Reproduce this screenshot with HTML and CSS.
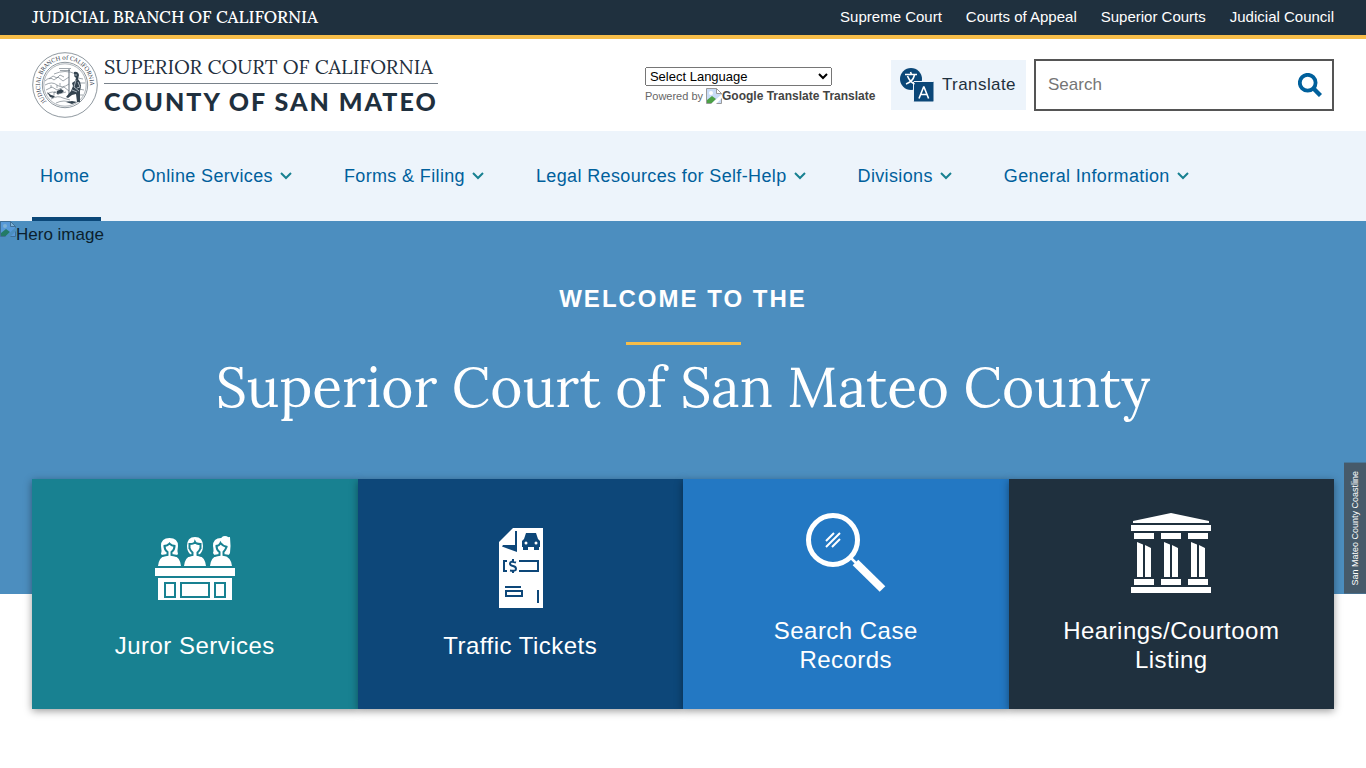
FILE: index.html
```html
<!DOCTYPE html>
<html lang="en">
<head>
<meta charset="utf-8">
<title>Superior Court of San Mateo County</title>
<meta name="viewport" content="width=device-width, initial-scale=1">
<link rel="stylesheet" href="styles.css">
</head>
<body>
<div class="topbar">
  <a class="topbar-brand" href="#">JUDICIAL BRANCH OF CALIFORNIA</a>
  <nav class="topbar-links" aria-label="Judicial branch">
    <a href="#">Supreme Court</a>
    <a href="#">Courts of Appeal</a>
    <a href="#">Superior Courts</a>
    <a href="#">Judicial Council</a>
  </nav>
</div>

<header class="header">
  <a class="logo" href="#">
    <svg class="seal" viewBox="0 0 66 66" aria-hidden="true">
      <defs><path id="ring" d="M14.500 49.500A25 25 0 1 1 51.500 49.500"/></defs>
      <g fill="none" stroke="#5f6b76">
        <circle cx="33" cy="33" r="32.300" stroke-width=".7"/>
        <circle cx="33" cy="33" r="22.700" stroke-width=".7"/>
        <circle cx="33" cy="33" r="21.200" stroke-width=".5"/>
        <g stroke-width=".6">
          <path d="M13 29q5-5 9-1l4-3 5 4 6-4M13 33q7-4 12 0t12-1M14 38l6-3 5 3 7-3 5 4M15 42q6-4 11 0l8-2M19 47q7-4 12-1l7 2M24 51q8-4 16 0M17 27l4-3 4 2 3-3 4 2"/>
          <path d="M27 16.500h12M28 18.500h10M22 22q11-5 22 0M46 26l5 1M48 31h5M47 37l5 1M47 43h4M22 43v-3h4v3M28 34v-3M25 36v-3M19 33v3"/>
          <path d="M37 17v27" stroke-width="1"/>
        </g>
      </g>
      <g fill="#34434f">
        <path d="M42 20q4-1 5 3l-1 4q3 3 3 7l-1 5v11h-3l-1-8-4 1-4 3-2-1 5-6 2-5-1-3 3-2 1-3-2-2z"/>
        <path d="M25 39l4-2 3 2-2 2-5 1zM15 40l4 3 4 1-2 2-3-1zM34 50l6-1 5 1-5 2z"/>
      </g>
      <g stroke="#dce4ea" stroke-width=".7" fill="none"><path d="M44 28l-2 7 5 4M46 30l2 5-3 1M42 23h3M40 38l5 2"/></g>
      <text class="seal-text"><textPath href="#ring">JUDICIAL BRANCH of CALIFORNIA</textPath></text>
    </svg>
    <span class="logo-words">
      <span class="logo-top">SUPERIOR COURT OF CALIFORNIA</span>
      <span class="logo-bottom">COUNTY OF SAN MATEO</span>
    </span>
  </a>

  <div class="tools">
    <div class="gtranslate">
      <select class="language" aria-label="Language Translate Widget"><option>Select Language</option></select>
      <div class="powered">Powered by
        <a href="#"><svg class="broken" viewBox="0 0 16 16" aria-hidden="true"><path d="M.5.500h10l5 5v10H.5z" fill="#c9dcf7" stroke="#9a9a9a"/><path d="M10.500.500v5h5z" fill="#fff" stroke="#9a9a9a"/><circle cx="5" cy="5" r="2" fill="#fff"/><path d="M1 15v-3l5-4 4 3-4 4z" fill="#4ca146"/><path d="M5 16L16 6v4l-6 6z" fill="#fff"/></svg>Google Translate Translate</a>
      </div>
    </div>
    <button class="translate" type="button">
      <svg viewBox="0 0 34 34" aria-hidden="true">
        <circle cx="11" cy="11" r="11" fill="#0b4778"/>
        <path d="M14 13.500h19.500a1 1 0 0 1 .5 1v18.500a1 1 0 0 1-1 1H14.500a1 1 0 0 1-1-1V14z" fill="#0b4778" stroke="#edf4fb" stroke-width="1"/>
        <path d="M5 6.500h12M10.500 4l1 2.500M14.500 7c-1 4-4 7.500-8.500 9M7.500 8c1.500 4 4 6.500 7 8" fill="none" stroke="#fff" stroke-width="1.600"/>
        <path d="M19 30.500l4.800-12 4.800 12M20.500 26.500h6.600" fill="none" stroke="#fff" stroke-width="1.600" stroke-linejoin="bevel"/>
      </svg>
      Translate
    </button>
    <form class="search" role="search">
      <input type="search" placeholder="Search" aria-label="Search">
      <button type="submit" aria-label="Submit search">
        <svg viewBox="0 0 24 24" aria-hidden="true"><circle cx="9.700" cy="9.700" r="7.900" fill="none" stroke="#00609c" stroke-width="3.800"/><path d="M15.500 15.500l7 7" stroke="#00609c" stroke-width="4.400"/></svg>
      </button>
    </form>
  </div>
</header>

<nav class="mainnav" aria-label="Main">
  <a class="active" href="#" aria-current="page">Home</a>
  <a href="#">Online Services<svg viewBox="0 0 12 8" aria-hidden="true"><path d="M1 1l5 5 5-5"/></svg></a>
  <a href="#">Forms &amp; Filing<svg viewBox="0 0 12 8" aria-hidden="true"><path d="M1 1l5 5 5-5"/></svg></a>
  <a href="#">Legal Resources for Self-Help<svg viewBox="0 0 12 8" aria-hidden="true"><path d="M1 1l5 5 5-5"/></svg></a>
  <a href="#">Divisions<svg viewBox="0 0 12 8" aria-hidden="true"><path d="M1 1l5 5 5-5"/></svg></a>
  <a href="#">General Information<svg viewBox="0 0 12 8" aria-hidden="true"><path d="M1 1l5 5 5-5"/></svg></a>
</nav>

<main>
  <section class="hero">
    <div class="hero-image"><svg class="broken" viewBox="0 0 16 16" aria-hidden="true"><path d="M.5.500h10l5 5v10H.5z" fill="#5799d8" stroke="#3f6f96"/><path d="M10.500.500v5h5z" fill="#7db1d6" stroke="#3f6f96"/><circle cx="5" cy="5" r="2" fill="#7db1d6"/><path d="M1 15v-3l5-4 4 3-4 4z" fill="#237a66"/><path d="M5 16L16 6v4l-6 6z" fill="#4c8ebf"/></svg>Hero image</div>
    <h1 class="hero-title"><span class="welcome">WELCOME TO THE</span><span class="court">Superior Court of San Mateo County</span></h1>
    <span class="caption">San Mateo County Coastline</span>
  </section>

  <section class="cards" aria-label="Popular services">
    <a class="card teal" href="#">
      <svg viewBox="0 0 80 80" fill="#fff" aria-hidden="true">
        <path d="M0 40h80v8H0zM3 50h74v22H3z"/>
        <path d="M3 38q1-9 7-10h9q6 1 7 10zM29 38q1-9 7-10h8q6 1 7 10zM55 38q1-9 7-10h7q7 1 8 10z"/>
        <path d="M6 26q1-3 0-8 0-8 8.500-8T23 18q-1 5 0 8-2 3-5 3h-7q-3 0-5-3zM32 18q0-9 8-9t8 9q0 6-4 9v3h-8v-3q-4-3-4-9zM58 25q1-2 0-7 0-8 8-8l9-1q1 9 0 16-2 4-5 4h-6q-4 0-6-4z"/>
        <circle cx="70" cy="12" r="4"/>
        <g fill="none" stroke="#188191" stroke-width="2">
          <path d="M8.500 18q4 0 6-2.500 2 2.500 6 2.500M9.500 18q0 4 3 6v3l-6 1M19.500 18q0 4-3 6v3l6 1"/>
          <path d="M34.500 21v-5q5 0 5.500-2 1 2 5.500 2v5M34.500 20q1 3 3 4.500v2.500l-5 1M45.500 20q-1 3-3 4.500v2.500l5 1"/>
          <path d="M60.500 18q4 0 5-3 2 3 7 4M61.500 18q0 4 3 6v3l-6 1M71.500 19q-1 3-3 5v3l6 1"/>
          <path d="M10 55h10v14H10zM26 55h28v14H26zM60 55h10v14H60z"/>
        </g>
      </svg>
      <span>Juror Services</span>
    </a>
    <a class="card navy" href="#">
      <svg viewBox="0 0 80 80" aria-hidden="true">
        <path d="M19 14L33 0h30v80H19z" fill="#fff"/>
        <path d="M35 3h2v21L22 18.500l1-1.500h12z" fill="#0d4779"/>
        <g fill="#0d4779"><path d="M42 13l2-2 2-6h10l2 6 2 2v6H42zM43 18h5v4h-5zM54 18h5v4h-5z"/><path d="M23 32h4v2h-2v8h2v2h-4zM39 32h20v12H39v-2h18v-8H39zM25 58h16v2H25zM25 62h18v7H25zM57 62h2v13h-2z"/></g>
        <path d="M27 64h14v3H27z" fill="#fff"/><circle cx="46" cy="15" r="1.500" fill="#fff"/><circle cx="56" cy="15" r="1.500" fill="#fff"/>
        <path d="M36 34.500q-6-2-6 1 0 2 3 2.500t3 3-6 1.500M33 31v3M33 42v3" fill="none" stroke="#0d4779" stroke-width="2"/>
      </svg>
      <span>Traffic Tickets</span>
    </a>
    <a class="card blue" href="#">
      <svg viewBox="0 0 80 80" fill="none" stroke="#fff" aria-hidden="true">
        <circle cx="27" cy="27" r="24.500" stroke-width="5"/><path d="M45 45l7 7" stroke-width="2.500"/><path d="M49.500 49.500L76.500 76" stroke-width="8"/>
        <path d="M20 28l8-8M20 34l14-14M26 34l8-8" stroke-width="2"/>
      </svg>
      <span>Search Case Records</span>
    </a>
    <a class="card dark" href="#">
      <svg viewBox="0 0 80 80" fill="#fff" aria-hidden="true">
        <path d="M40 0l38 8v2H2V8zM0 12h80v6H0zM3 20h20v6H3zM30 20h20v6H30zM57 20h20v6H57zM3 66h20v6H3zM30 66h20v6H30zM57 66h20v6H57zM0 74h80v6H0z"/>
        <path d="M6 29l6 2.500V64H6zM14 32l6 3v29h-6zM33 29l6 2.500V64h-6zM41 32l6 3v29h-6zM60 29l6 2.500V64h-6zM68 32l6 3v29h-6z"/>
      </svg>
      <span>Hearings/Courtoom Listing</span>
    </a>
  </section>
</main>
</body>
</html>
```
FILE: styles.css
```css
* { box-sizing: border-box; }
body {
  margin: 0;
  background: #fff;
  color: #1f303e;
  font-family: "Liberation Sans", Arial, sans-serif;
  font-size: 17px;
}
a { color: inherit; text-decoration: none; }
svg { display: block; flex: none; }

.topbar {
  display: flex;
  justify-content: space-between;
  align-items: center;
  min-height: 39px;
  padding: 0 32px 2px;
  border-bottom: 4px solid #f6bd49;
  background: #1f303e;
  color: #fff;
}
.topbar-brand { font: 500 17px/20px Lora, "Liberation Serif", serif; }
.topbar-links { display: flex; gap: 24px; font-size: 15px; line-height: 20px; }

.header {
  display: flex;
  justify-content: space-between;
  align-items: center;
  min-height: 92px;
  padding: 0 32px;
}
.logo { display: flex; align-items: center; gap: 6px; }
.seal { width: 66px; height: 66px; }
.seal-text { font: 6px Lora, "Liberation Serif", serif; fill: #1f303e; }
.logo-words { display: flex; flex-direction: column; padding-top: 2px; white-space: nowrap; }
.logo-top {
  padding-bottom: 4px;
  border-bottom: 1px solid #79828b;
  font: 20px/24px Lora, "Liberation Serif", serif;
}
.logo-bottom { font: 900 25px/34px Lato, sans-serif; letter-spacing: 2px; }

.tools { display: flex; align-items: center; }
.gtranslate { width: 230px; margin-right: 16px; }
.language {
  display: block;
  width: 187px;
  height: 19px;
  margin-top: 2px;
  font: 13px "Liberation Sans", Arial, sans-serif;
}
.powered {
  display: flex;
  align-items: center;
  gap: 3px;
  color: #666;
  font-size: 11px;
  line-height: 20px;
  white-space: nowrap;
}
.powered a { display: flex; align-items: center; color: #444; font-size: 12px; font-weight: bold; }
.broken { width: 16px; height: 16px; }
.translate {
  display: flex;
  align-items: center;
  gap: 8px;
  height: 50px;
  margin-right: 8px;
  padding: 0 10px 0 9px;
  border: 0;
  background: #edf4fb;
  color: #1f303e;
  font: 17px "Liberation Sans", Arial, sans-serif;
  letter-spacing: 0.025em;
}
.translate svg { width: 34px; height: 34px; }
.search { display: flex; width: 300px; height: 52px; border: 2px solid #555; }
.search input {
  flex: 1;
  min-width: 0;
  padding: 0 12px;
  border: 0;
  background: none;
  font: 17px "Liberation Sans", Arial, sans-serif;
}
.search input::placeholder { color: #757575; }
.search button { padding: 0 10px; border: 0; background: none; }
.search svg { width: 24px; height: 24px; }

.mainnav {
  display: flex;
  gap: 32px;
  padding: 0 32px;
  background: #edf4fb;
  color: #00609c;
  font-size: 18px;
  letter-spacing: 0.02em;
}
.mainnav a {
  display: flex;
  align-items: center;
  gap: 7px;
  height: 90px;
  padding: 4px 12px 0 8px;
  border-bottom: 4px solid transparent;
}
.mainnav .active { border-color: #0b4778; }
.mainnav svg { width: 12px; height: 8px; fill: none; stroke: #188191; stroke-width: 2; }

.hero {
  position: relative;
  min-height: 373px;
  background: #4c8ebf;
  color: #fff;
  text-align: center;
}
.hero-image {
  position: absolute;
  top: 0;
  left: 0;
  display: flex;
  color: #0b1f2e;
  line-height: 28px;
}
.hero-title { display: flex; flex-direction: column; align-items: center; margin: 0; padding-top: 62px; }
.welcome {
  font-size: 24px;
  line-height: 32px;
  letter-spacing: 2px;
}
.welcome::after {
  content: "";
  display: block;
  width: 115px;
  height: 3px;
  margin: 27px auto 0;
  background: #f6bd49;
}
.court { font: 400 55px/84px Lora, Georgia, "Liberation Serif", serif; }
.caption {
  position: absolute;
  right: 0;
  bottom: 0;
  padding: 8px 6px;
  background: #465a6a;
  font-size: 9px;
  line-height: 10px;
  writing-mode: vertical-rl;
  transform: rotate(180deg);
}

.cards {
  position: relative;
  display: grid;
  grid-template-columns: repeat(4, 1fr);
  margin: -115px 32px 48px;
}
.card {
  display: flex;
  flex-direction: column;
  align-items: center;
  justify-content: center;
  gap: 23px;
  min-height: 230px;
  padding: 32px 48px 33px;
  box-shadow: 0 2px 8px rgba(0, 0, 0, 0.4);
  color: #fff;
  font-size: 24px;
  line-height: 29px;
  letter-spacing: 0.02em;
  text-align: center;
}
.card svg { width: 80px; height: 80px; }
.teal { background: #188191; }
.navy { background: #0d4779; }
.blue { background: #2378c3; }
.dark { background: #1f303e; }
```
